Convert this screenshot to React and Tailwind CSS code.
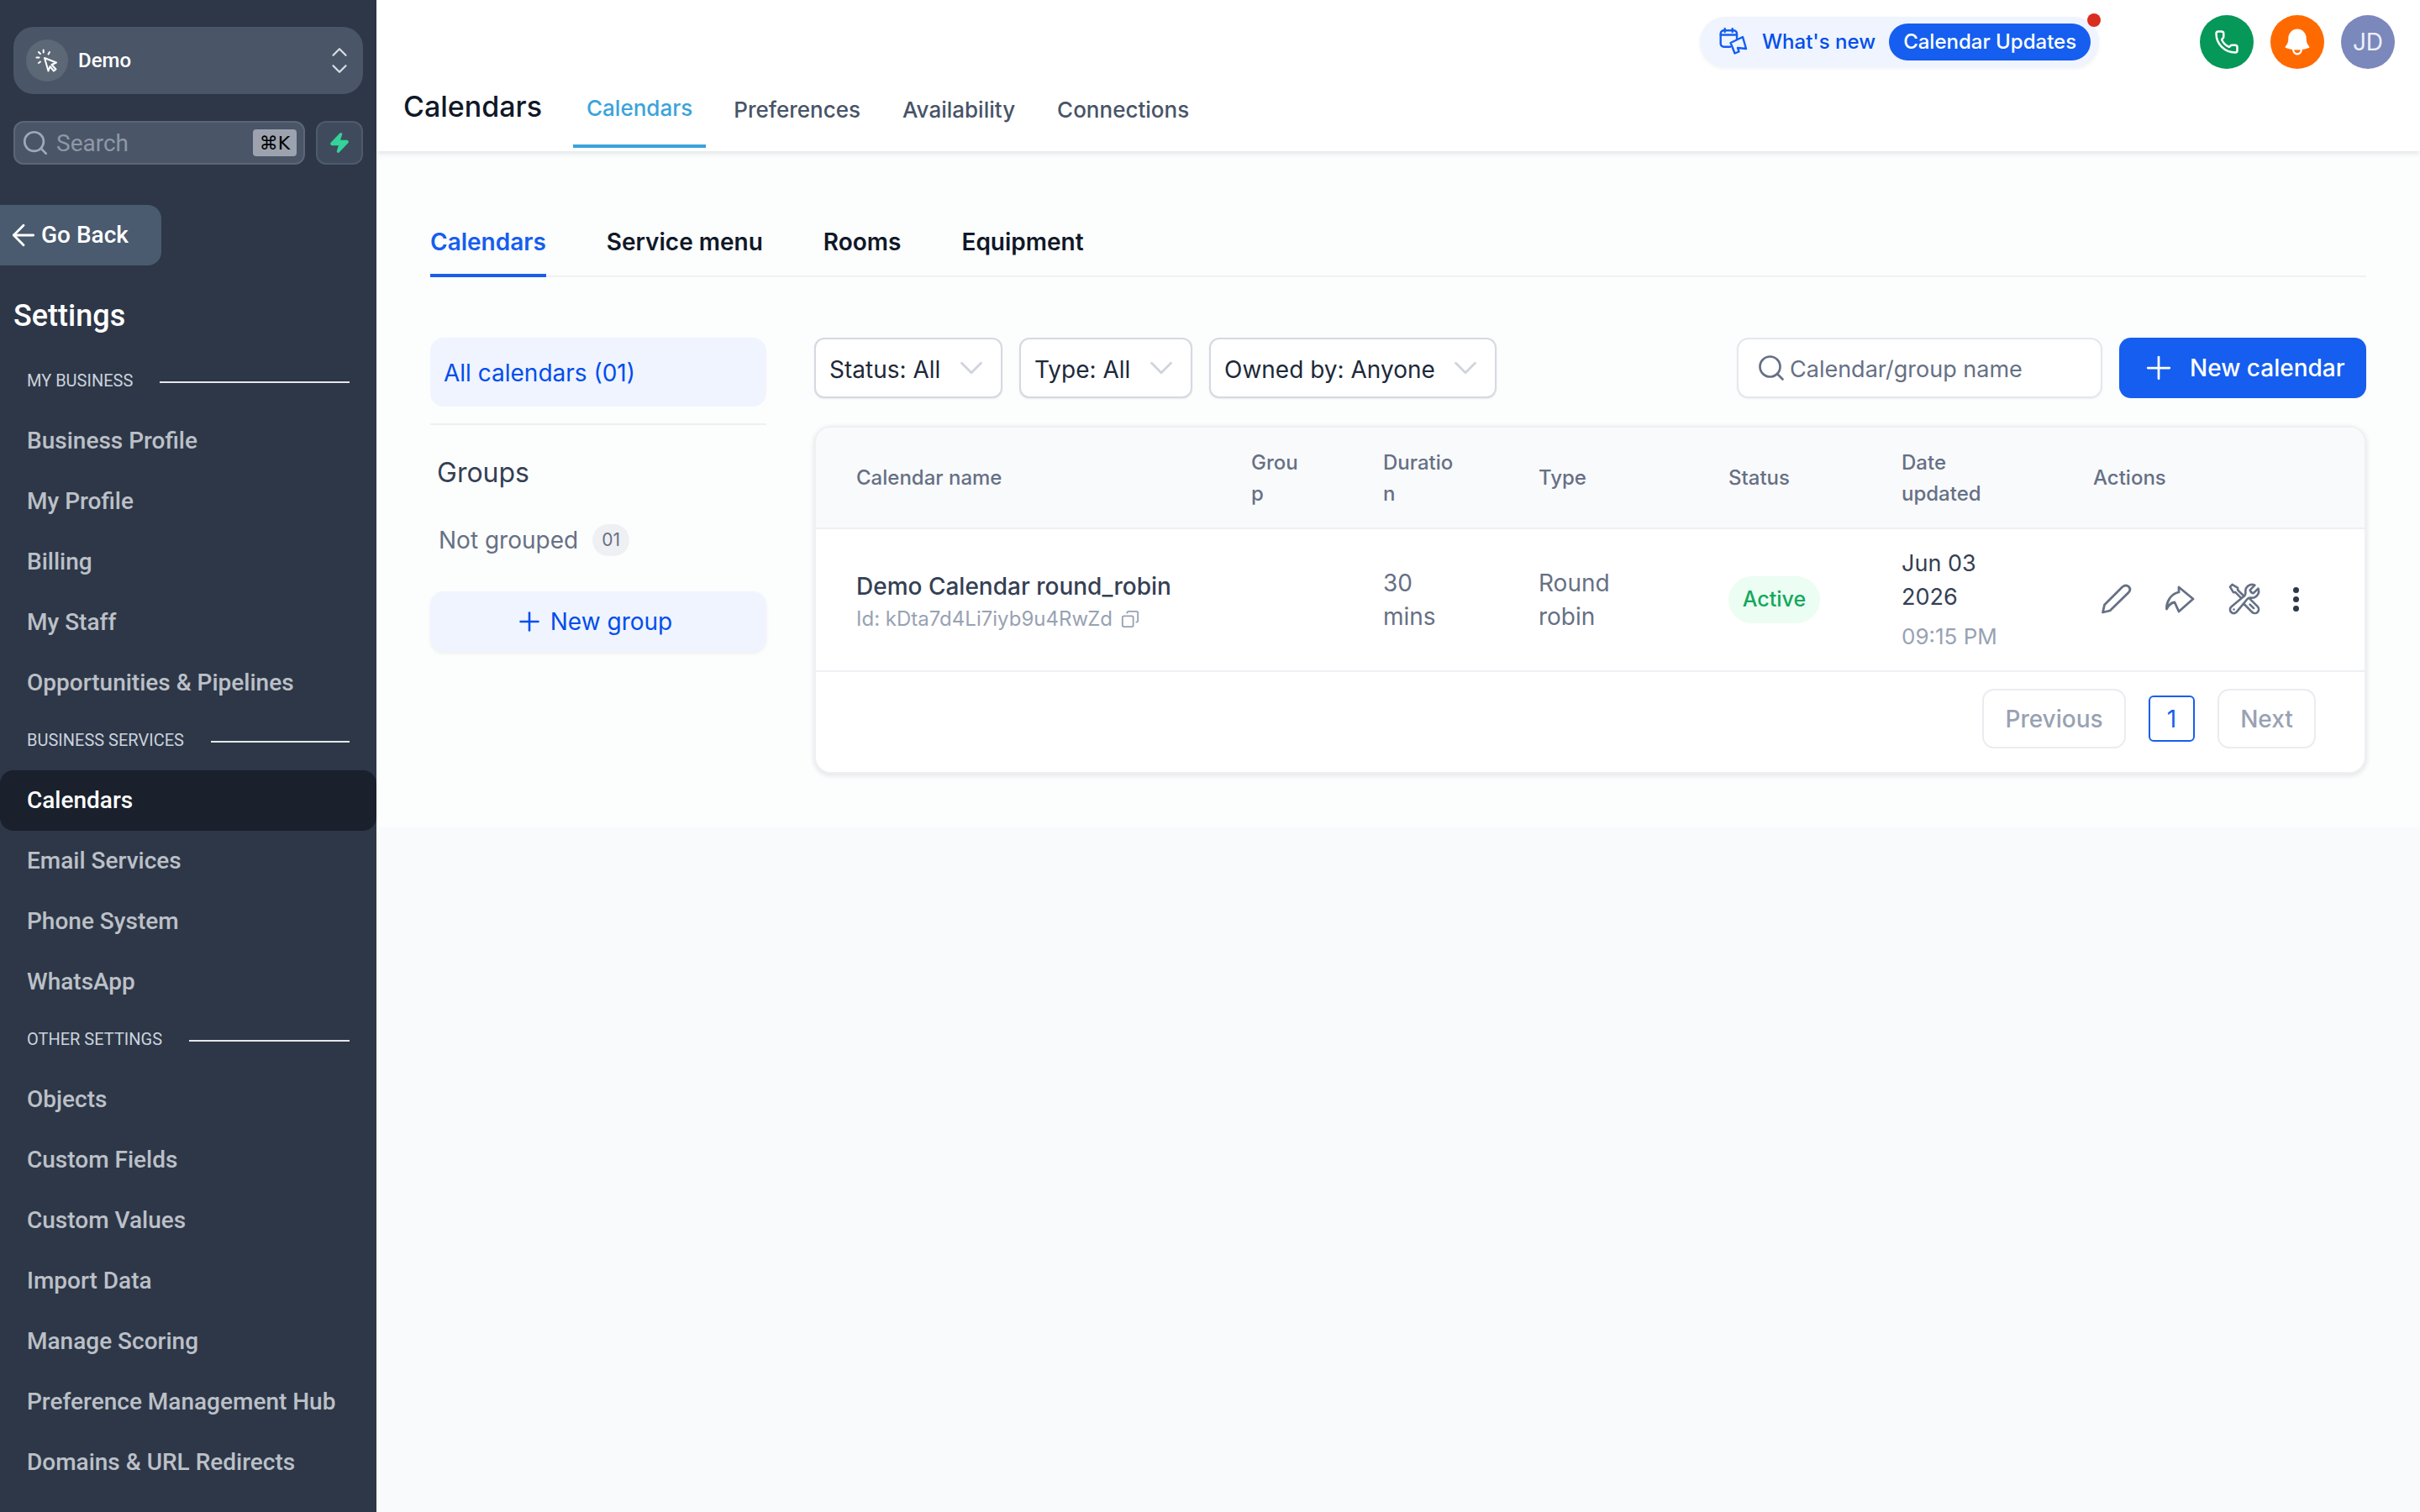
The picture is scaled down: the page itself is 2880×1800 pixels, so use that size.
import { ArrowLeft, ChevronDown, ChevronUp, Copy, Phone, Plus, Search, Zap } from "lucide-react";
import { HiBell, HiOutlineWrenchScrewdriver } from "react-icons/hi2";

const sections = [
    { title: "MY BUSINESS", items: ["Business Profile", "My Profile", "Billing", "My Staff", "Opportunities & Pipelines"] },
    { title: "BUSINESS SERVICES", items: ["Calendars", "Email Services", "Phone System", "WhatsApp"] },
    {
        title: "OTHER SETTINGS",
        items: ["Objects", "Custom Fields", "Custom Values", "Import Data", "Manage Scoring", "Preference Management Hub", "Domains & URL Redirects"],
    },
];

function CursorIcon() {
    return (
        <svg width="30" height="30" viewBox="0 0 30 30" fill="none" stroke="white" strokeWidth="2" strokeLinecap="round" strokeLinejoin="round">
            <path d="M12 12 L26 17.5 L20.5 20 L25.5 25.5 L23 27.5 L18.5 22 L16.5 27.5 Z" />
            <path d="M10.7 2.5v3M18 5l-1.5 2.5M5 5l2 2M2.5 11.5h3M5 18l2-1.5" />
        </svg>
    );
}

function Sidebar() {
    return (
        <aside className="w-[448px] shrink-0 h-[1800px] overflow-hidden bg-[#2d3748] pt-[32px] font-['Roboto',sans-serif]">
            <div className="mx-[16px] h-[80px] rounded-[24px] bg-[#4a5568] flex items-center pl-[15px] pr-[13px]">
                <div className="w-[50px] h-[50px] rounded-full bg-[#5d6877] flex items-center justify-center">
                    <CursorIcon />
                </div>
                <span className="ml-[12px] text-[24px] font-medium text-white">Demo</span>
                <div className="ml-auto flex flex-col text-[#d8dce3]">
                    <ChevronUp size={30} className="-mb-[10px]" strokeWidth={1.8} />
                    <ChevronDown size={30} strokeWidth={1.8} />
                </div>
            </div>

            <div className="mx-[16px] mt-[32px] flex gap-[13px]">
                <div className="flex-1 h-[52px] rounded-[12px] bg-[#4a5568] border-2 border-[#5c6676] flex items-center pl-[7px] pr-[8px]">
                    <Search size={34} className="text-[#a0a8b5]" strokeWidth={1.9} />
                    <span className="ml-[8px] pt-[1px] text-[28px] text-[#8f98a6]">Search</span>
                    <span className="ml-auto w-[52px] h-[32px] rounded-[4px] bg-[#9ca3af] flex items-center justify-center text-[22px] text-black font-['DejaVu_Sans',sans-serif]">
                        ⌘K
                    </span>
                </div>
                <div className="w-[56px] h-[52px] rounded-[12px] bg-[#3f4b5d] border-2 border-[#4f5a6b] flex items-center justify-center">
                    <Zap size={26} className="text-[#34d399]" fill="#34d399" />
                </div>
            </div>

            <div className="mt-[48px] w-[192px] h-[72px] rounded-r-[16px] bg-[#4a5a6f] flex items-center pl-[8px] gap-[1px] text-white">
                <ArrowLeft size={40} strokeWidth={1.7} />
                <span className="text-[28px] font-medium">Go Back</span>
            </div>

            <h2 className="mt-[36px] pl-[16px] text-[36px] leading-[48px] font-medium text-white">Settings</h2>

            <div className="pt-[21px]">
                {sections.map((section) => (
                    <div key={section.title}>
                        <div className="mt-[20px] mb-[24px] h-[24px] pl-[32px] pr-[32px] flex items-center gap-[32px]">
                            <span className="text-[20px] leading-[24px] text-[#cbd2dc] whitespace-nowrap">{section.title}</span>
                            <div className="mt-[4px] flex-1 h-[2px] bg-[#e5e7eb]" />
                        </div>
                        {section.items.map((item) => (
                            <div
                                key={item}
                                className={
                                    item === "Calendars"
                                        ? "h-[72px] rounded-[16px] bg-[#1a202c] pl-[32px] flex items-center text-[28px] font-medium text-white"
                                        : "h-[72px] pl-[32px] flex items-center text-[28px] font-medium text-[#bcc0c7] whitespace-nowrap"
                                }
                            >
                                {item}
                            </div>
                        ))}
                    </div>
                ))}
            </div>
        </aside>
    );
}

function CalendarMegaphone() {
    return (
        <svg width="34" height="34" viewBox="0 0 34 34" fill="none" stroke="#155eef" strokeWidth="2.4" strokeLinecap="round" strokeLinejoin="round">
            <path d="M13 22.7H5.5a3.8 3.8 0 0 1-3.8-3.8V7.1a3.8 3.8 0 0 1 3.8-3.8h11.7A3.8 3.8 0 0 1 21 7.1v6" />
            <path d="M1.7 8.5H21M6.7 1v4M15.7 1v4" />
            <path d="M13.5 18 L28 11 L32 25 L22 24 L23.5 28.5 L18.5 30.5 L16 24 Z" />
        </svg>
    );
}

function PencilIcon() {
    return (
        <svg width="36" height="36" viewBox="0 0 36 36" fill="none" stroke="#667085" strokeWidth="2.8" strokeLinejoin="round">
            <path d="M1.5 34 L3.5 25 L25 3.5 Q29 0.5 32.5 3.5 Q35.5 7 32 10.5 L10 32 Z" />
        </svg>
    );
}

function ShareIcon() {
    return (
        <svg width="35" height="33" viewBox="0 0 35 33" fill="none" stroke="#667085" strokeWidth="2.8" strokeLinejoin="round">
            <path d="M16 2 L33 16 L16 31 L11 20 C7 20.5 3.5 24 1.5 28 C1 20 6 10 16 8 Z" />
        </svg>
    );
}

function Header() {
    return (
        <header className="h-[180px] bg-white relative z-10 shadow-[0_2px_6px_rgba(16,24,40,0.12)]">
            <div className="h-[64px] mt-0 pt-[18px] box-content flex items-center justify-end pr-[30px]">
                <div className="relative h-[60px] w-[475px] rounded-full bg-[#eff4ff] shadow-[0_2px_4px_rgba(16,24,40,0.05)] flex items-center pl-[23px] mr-[120px]">
                    <CalendarMegaphone />
                    <span className="ml-[17px] text-[24px] font-medium text-[#004eeb] whitespace-nowrap">What's new</span>
                    <span className="ml-[16px] w-[240px] h-[44px] rounded-full bg-[#155eef] flex items-center justify-center text-[24px] font-medium text-white whitespace-nowrap">
                        Calendar Updates
                    </span>
                    <span className="absolute right-[-2px] top-[-4px] w-[16px] h-[16px] rounded-full bg-[#d92d20]" />
                </div>
                <div className="flex gap-[20px]">
                    <div className="w-[64px] h-[64px] rounded-full bg-[#059858] flex items-center justify-center">
                        <Phone size={30} className="text-white" strokeWidth={2} />
                    </div>
                    <div className="w-[64px] h-[64px] rounded-full bg-[#ff6a00] flex items-center justify-center">
                        <HiBell size={38} className="text-white" />
                    </div>
                    <div className="w-[64px] h-[64px] rounded-full bg-[#7a88bb] flex items-center justify-center text-[28px] text-[#eef0f8]">JD</div>
                </div>
            </div>
            <div className="mt-[18px] pl-[32px] flex items-start">
                <h1 className="mt-[5px] text-[34px] leading-[44px] font-medium text-[#101828]">Calendars</h1>
                <nav className="ml-[37px] flex gap-[16px]">
                    <div className="h-[76px] px-[16px] border-b-4 border-[#3ba3db] pt-[9px] text-[26px] leading-[40px] font-medium text-[#3ba3db]">Calendars</div>
                    {["Preferences", "Availability", "Connections"].map((t) => (
                        <div key={t} className="h-[76px] px-[17px] pt-[11px] text-[26px] leading-[40px] font-medium text-[#475467]">
                            {t}
                        </div>
                    ))}
                </nav>
            </div>
        </header>
    );
}

function FilterSelect({ label, className }) {
    return (
        <div className={`h-[72px] rounded-[12px] bg-white border-2 border-[#d5d9e2] shadow-[0_1px_2px_rgba(16,24,40,0.08)] flex items-center justify-between pl-[16px] pr-[12px] ${className}`}>
            <span className="pt-[4px] text-[28px] text-[#1d2939] whitespace-nowrap">{label}</span>
            <ChevronDown size={46} className="text-[#d0d5dd]" strokeWidth={1.5} />
        </div>
    );
}

function CalendarTable() {
    return (
        <div className="mt-[33px] h-[414px] rounded-[20px] bg-white border-2 border-[#eef0f3] shadow-[0_2px_6px_rgba(16,24,40,0.12)] overflow-hidden">
            <div className="h-[121px] bg-[#f9fafc] border-b-2 border-[#eef0f3] pl-[48px] grid grid-cols-[470px_157px_185px_226px_206px_228px_1fr] items-center text-[24px] leading-[37px] font-medium text-[#667085]">
                <div>Calendar name</div>
                <div className="w-[60px] break-all">Group</div>
                <div className="w-[90px] break-all">Duration</div>
                <div>Type</div>
                <div>Status</div>
                <div className="w-[120px]">Date updated</div>
                <div>Actions</div>
            </div>
            <div className="h-[170px] border-b-2 border-[#eef0f3] pl-[48px] grid grid-cols-[470px_157px_185px_226px_206px_228px_1fr] items-center">
                <div>
                    <div className="text-[28px] leading-[44px] font-medium text-[#344054] whitespace-nowrap">Demo Calendar round_robin</div>
                    <div className="mt-[1px] flex items-center gap-[10px] text-[24px] leading-[32px] text-[#98a2b3]">
                        Id: kDta7d4Li7iyb9u4RwZd
                        <Copy size={22} className="text-[#98a2b3] -scale-x-100" />
                    </div>
                </div>
                <div />
                <div className="w-[90px] text-[28px] leading-[40px] text-[#667085]">30 mins</div>
                <div className="w-[110px] text-[28px] leading-[40px] text-[#667085]">Round robin</div>
                <div>
                    <span className="inline-flex items-center justify-center w-[109px] h-[56px] rounded-full bg-[#ecfdf3] text-[25px] font-medium text-[#14a85c]">Active</span>
                </div>
                <div className="w-[120px] pb-[4px]">
                    <div className="text-[27px] leading-[40px] text-[#344054]">Jun 03 2026</div>
                    <div className="mt-[11px] text-[26px] leading-[32px] text-[#98a2b3] whitespace-nowrap">09:15 PM</div>
                </div>
                <div className="flex items-center pl-[10px] pb-[2px]">
                    <PencilIcon />
                    <div className="ml-[40px]">
                        <ShareIcon />
                    </div>
                    <HiOutlineWrenchScrewdriver size={42} className="ml-[38px] text-[#667085]" />
                    <div className="ml-[37px] flex flex-col gap-[4px]">
                        <span className="w-[7px] h-[7px] rounded-full bg-[#2d3748]" />
                        <span className="w-[7px] h-[7px] rounded-full bg-[#2d3748]" />
                        <span className="w-[7px] h-[7px] rounded-full bg-[#2d3748]" />
                    </div>
                </div>
            </div>
            <div className="h-[119px] flex items-center justify-end pr-[58px] pb-[8px]">
                <div className="w-[171px] h-[71px] rounded-[14px] border-2 border-[#eaecf0] flex items-center justify-center text-[28px] font-medium text-[#98a2b3]">Previous</div>
                <div className="ml-[27px] w-[55px] h-[55px] rounded-[6px] border-2 border-[#155eef] flex items-center justify-center text-[28px] text-[#155eef]">1</div>
                <div className="ml-[27px] w-[117px] h-[71px] rounded-[14px] border-2 border-[#eaecf0] flex items-center justify-center text-[28px] font-medium text-[#98a2b3]">Next</div>
            </div>
        </div>
    );
}

export default function App() {
    return (
        <div className="w-[2880px] h-[1800px] overflow-hidden flex bg-[#f9fafb] font-['Inter',sans-serif]">
            <Sidebar />
            <main className="flex-1">
                <Header />
                <section className="h-[805px] bg-[#fcfdfd] px-[64px] pt-[86px]">
                    <div className="flex gap-[72px] border-b-2 border-[#f0f1f5] h-[64px]">
                        <div className="h-[64px] border-b-4 border-[#155eef] text-[28px] leading-[44px] font-semibold text-[#155eef]">Calendars</div>
                        {["Service menu", "Rooms", "Equipment"].map((t) => (
                            <div key={t} className="text-[28px] leading-[44px] font-semibold text-[#101828]">
                                {t}
                            </div>
                        ))}
                    </div>

                    <div className="mt-[72px] flex gap-[57px]">
                        <div className="w-[400px] shrink-0">
                            <div className="h-[82px] rounded-[16px] bg-[#f0f4ff] pl-[16px] pt-[1px] flex items-center text-[28px] text-[#004eeb]">All calendars (01)</div>
                            <div className="mt-[20px] h-[2px] bg-[#eef0f3]" />
                            <div className="mt-[33px] pl-[8px] text-[32px] leading-[48px] text-[#344054]">Groups</div>
                            <div className="mt-[37px] pl-[10px] flex items-center gap-[17px]">
                                <span className="text-[28px] leading-[38px] text-[#667085]">Not grouped</span>
                                <span className="w-[44px] h-[38px] rounded-full bg-[#eef0f3] flex items-center justify-center text-[21px] text-[#667085]">01</span>
                            </div>
                            <div className="mt-[42px] h-[72px] rounded-[16px] bg-[#f0f4ff] shadow-[0_2px_4px_rgba(16,24,40,0.06)] flex items-center justify-center gap-[7px] pr-[12px] text-[28px] text-[#004eeb]">
                                <Plus size={36} strokeWidth={1.7} />
                                New group
                            </div>
                        </div>

                        <div className="flex-1">
                            <div className="flex items-center gap-[20px]">
                                <FilterSelect label="Status: All" className="w-[224px]" />
                                <FilterSelect label="Type: All" className="w-[206px]" />
                                <FilterSelect label="Owned by: Anyone" className="w-[342px]" />
                                <div className="ml-auto w-[435px] h-[72px] rounded-[14px] bg-white border-2 border-[#e4e7ec] shadow-[0_1px_2px_rgba(16,24,40,0.06)] flex items-center pl-[21px] gap-[4px]">
                                    <Search size={36} className="text-[#667085]" strokeWidth={1.8} />
                                    <span className="pt-[4px] text-[27px] text-[#667085] whitespace-nowrap">Calendar/group name</span>
                                </div>
                                <div className="w-[294px] h-[72px] rounded-[14px] bg-[#155eef] flex items-center pl-[25px] gap-[15px] text-[28px] font-medium text-white">
                                    <Plus size={44} strokeWidth={1.5} />
                                    New calendar
                                </div>
                            </div>
                            <CalendarTable />
                        </div>
                    </div>
                </section>
            </main>
        </div>
    );
}
